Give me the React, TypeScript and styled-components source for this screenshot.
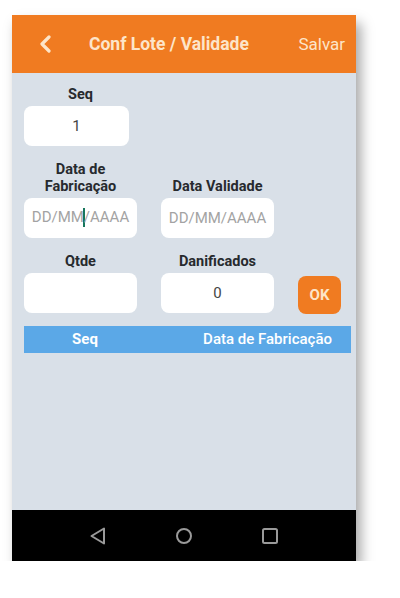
import React from 'react';
import styled, { createGlobalStyle } from 'styled-components';

const GlobalStyle = createGlobalStyle`
  body {
    margin: 0;
    background: #ffffff;
    font-family: Roboto, 'Liberation Sans', Arial, sans-serif;
  }
`;

const ORANGE = '#f07b21';
const CREAM = '#fde5c9';

const Phone = styled.div`
  margin: 15px 0 0 12px;
  width: 344px;
  height: 546px;
  display: flex;
  flex-direction: column;
  background: #d9e0e8;
  box-shadow: 5px 8px 12px rgba(0, 0, 0, 0.35);
`;

const Header = styled.header`
  height: 58px;
  flex-shrink: 0;
  display: flex;
  align-items: center;
  padding: 0 11px 0 26px;
  background: ${ORANGE};
  color: ${CREAM};
`;

const BackButton = styled.div`
  display: flex;
  width: 14px;
  height: 18px;
`;

const Title = styled.h1`
  margin: 0 0 0 37px;
  font-size: 17.5px;
  font-weight: 700;
`;

const SaveButton = styled.span`
  margin-left: auto;
  font-size: 17px;
`;

const Content = styled.main`
  flex: 1;
  padding: 14px 5px 0 12px;
`;

const Form = styled.div`
  display: grid;
  grid-template-columns: 113px 113px 43px;
  column-gap: 24px;
  row-gap: 16px;
  align-items: end;
`;

const Field = styled.div`
  display: flex;
  flex-direction: column;
  align-items: center;
`;

const Label = styled.label`
  font-size: 14.5px;
  line-height: 16.5px;
  font-weight: 700;
  color: #272a2e;
  text-align: center;
  margin-bottom: 2.5px;
`;

const InputBox = styled.div<{ $width?: number; $placeholder?: boolean }>`
  width: ${(p) => p.$width ?? 113}px;
  align-self: flex-start;
  height: 40px;
  box-sizing: border-box;
  display: flex;
  align-items: center;
  justify-content: center;
  background: #ffffff;
  border-radius: 8px;
  font-size: 15px;
  color: ${(p) => (p.$placeholder ? '#a3a3a3' : '#454545')};
`;

const Caret = styled.span`
  display: inline-block;
  width: 2px;
  height: 19px;
  margin: 0 -1px;
  background: #17765c;
  vertical-align: middle;
`;

const OkButton = styled.button`
  height: 38px;
  width: 43px;
  margin-bottom: -1px;
  border: none;
  border-radius: 8px;
  background: ${ORANGE};
  color: ${CREAM};
  font-family: inherit;
  font-size: 15px;
  font-weight: 700;
  padding: 0;
`;

const TableHead = styled.div`
  margin-top: 13px;
  height: 27px;
  display: grid;
  grid-template-columns: 122px 1fr;
  align-items: center;
  background: #5ba8e7;
  color: #ffffff;
  font-size: 15px;
`;

const HeadCell = styled.div<{ $bold?: boolean; $right?: boolean }>`
  font-weight: ${(p) => (p.$bold ? 700 : 500)};
  text-align: ${(p) => (p.$right ? 'right' : 'center')};
  padding-right: ${(p) => (p.$right ? 19 : 0)}px;
`;

const NavBar = styled.nav`
  height: 51px;
  flex-shrink: 0;
  display: flex;
  align-items: center;
  justify-content: center;
  gap: 62px;
  padding-right: 1px;
  background: #000000;
`;

const NavIcon = styled.svg`
  width: 24px;
  height: 24px;
  fill: none;
  stroke: #9a9a9a;
  stroke-width: 2;
`;

const App: React.FC = () => (
  <>
    <GlobalStyle />
    <Phone>
      <Header>
        <BackButton>
          <svg width="14" height="18" viewBox="0 0 14 18">
            <polyline
              points="11,2 4,9 11,16"
              fill="none"
              stroke={CREAM}
              strokeWidth="3.2"
              strokeLinecap="round"
              strokeLinejoin="round"
            />
          </svg>
        </BackButton>
        <Title>Conf Lote / Validade</Title>
        <SaveButton>Salvar</SaveButton>
      </Header>
      <Content>
        <Form>
          <Field>
            <Label>Seq</Label>
            <InputBox $width={105}>1</InputBox>
          </Field>
          <div />
          <div />

          <Field>
            <Label>
              Data de
              <br />
              Fabricação
            </Label>
            <InputBox $placeholder>
              <span>
                DD/MM
                <Caret />
                /AAAA
              </span>
            </InputBox>
          </Field>
          <Field>
            <Label>Data Validade</Label>
            <InputBox $placeholder>DD/MM/AAAA</InputBox>
          </Field>
          <div />

          <Field>
            <Label>Qtde</Label>
            <InputBox />
          </Field>
          <Field>
            <Label>Danificados</Label>
            <InputBox>0</InputBox>
          </Field>
          <OkButton>OK</OkButton>
        </Form>
        <TableHead>
          <HeadCell $bold>Seq</HeadCell>
          <HeadCell $right>Data de Fabricação</HeadCell>
        </TableHead>
      </Content>
      <NavBar>
        <NavIcon viewBox="0 0 24 24">
          <polygon points="18,4.5 18,19.5 5.5,12" strokeLinejoin="round" />
        </NavIcon>
        <NavIcon viewBox="0 0 24 24">
          <circle cx="12" cy="12" r="7" />
        </NavIcon>
        <NavIcon viewBox="0 0 24 24">
          <rect x="5" y="5" width="14" height="14" rx="1.5" />
        </NavIcon>
      </NavBar>
    </Phone>
  </>
);

export default App;
